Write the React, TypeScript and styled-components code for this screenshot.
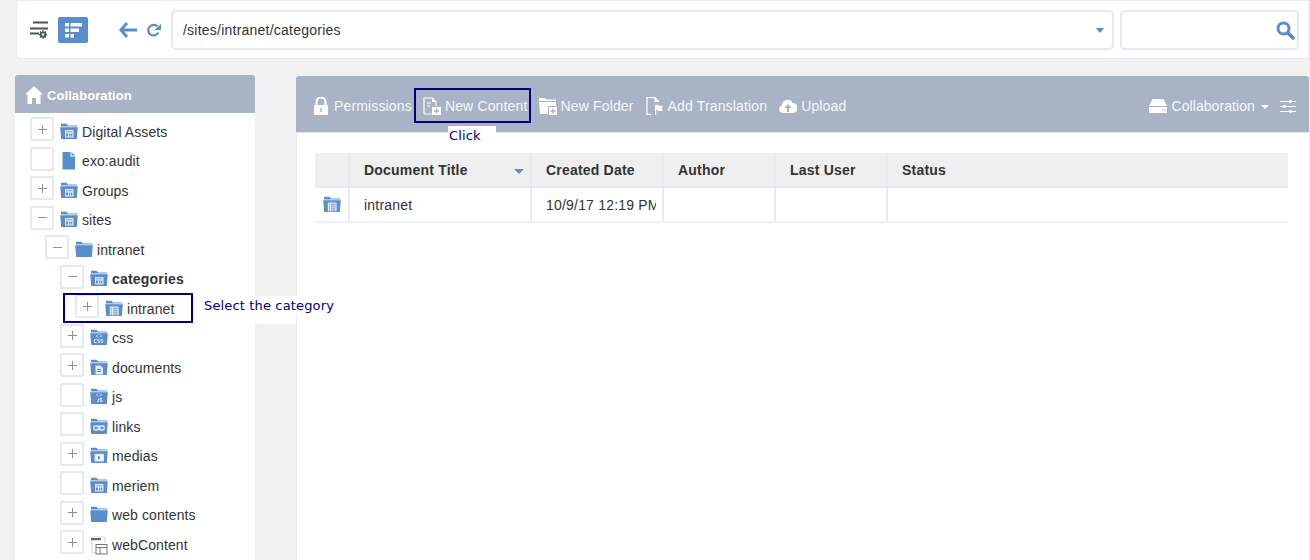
import React from "react";
import styled, { createGlobalStyle } from "styled-components";

const Global = createGlobalStyle`
  html, body { margin: 0; padding: 0; background: #f1f1f1; height: 100%; overflow: hidden; }
  body { font-family: "Liberation Sans", Arial, sans-serif; font-size: 14px; color: #333; }
`;

const Page = styled.div`
  position: relative;
  width: 1310px;
  height: 560px;
  overflow: hidden;
  background: #f1f1f1;
`;
const TopBar = styled.div`
  margin-left: 16px;
  width: 1293px;
  height: 59px;
  box-sizing: border-box;
  background: #fff;
  border: 1px solid #e6ebf1;
  border-radius: 0 0 3px 3px;
  display: flex;
  align-items: center;
  padding: 1px 0 0 13px;
`;
const ViewIcon = styled.div`
  width: 20px;
  height: 20px;
  margin-right: 8px;
  display: flex;
`;
const ViewButton = styled.div`
  width: 30px;
  height: 26px;
  border-radius: 2px;
  background: #5a8dcc;
  display: flex;
  align-items: center;
  justify-content: center;
  margin-right: 31px;
`;
const NavIcon = styled.div<{ $mr: number }>`
  display: flex;
  margin-right: ${(p) => p.$mr}px;
`;
const Field = styled.div<{ $w: number }>`
  width: ${(p) => p.$w}px;
  flex: none;
  height: 40px;
  box-sizing: border-box;
  border: 2px solid #e3e9f1;
  border-radius: 5px;
  display: flex;
  align-items: center;
  justify-content: space-between;
  background: #fff;
  padding: 0 2px 0 10px;
  color: #333;
`;
const PathText = styled.span`
  letter-spacing: 0.23px;
`;
const FieldCaret = styled.span`
  width: 0;
  height: 0;
  border-left: 4.5px solid transparent;
  border-right: 4.5px solid transparent;
  border-top: 5px solid #5a8dcc;
  margin-right: 6px;
`;
const Gap = styled.div`
  width: 6px;
  flex: none;
`;
const Body = styled.div`
  display: flex;
  align-items: flex-start;
  margin-top: 16px;
  padding-left: 15px;
`;
const Side = styled.div`
  width: 240px;
  height: 485px;
  background: #fff;
  border-radius: 3px 3px 0 0;
  flex: none;
`;
const SideHead = styled.div`
  height: 38px;
  box-sizing: border-box;
  background: #a8b3c5;
  border-radius: 3px 3px 0 0;
  display: flex;
  align-items: center;
  padding: 2px 0 0 10px;
  gap: 4px;
  color: #fff;
  font-weight: bold;
  font-size: 13px;
  letter-spacing: 0.08px;
`;
const TreeList = styled.div`
  padding: 4.5px 0 0 15px;
`;
const TreeRow = styled.div<{ $level: number }>`
  height: 29.5px;
  display: flex;
  align-items: flex-start;
  padding-left: ${(p) => p.$level * 15}px;
`;
const Toggle = styled.div`
  width: 24px;
  height: 24px;
  box-sizing: border-box;
  border: 2px solid #e3e9f0;
  border-radius: 2px;
  background: #fff;
  flex: none;
  display: flex;
  align-items: center;
  justify-content: center;
  margin-top: -0.5px;
  margin-right: 6px;
`;
const TreeIcon = styled.div`
  width: 18px;
  height: 18px;
  margin-top: 5px;
  flex: none;
  display: flex;
`;
const TreeLabel = styled.span<{ $bold?: boolean }>`
  margin-left: 4px;
  line-height: 16px;
  margin-top: 6px;
  color: #333;
  letter-spacing: ${(p) => (p.$bold ? "0.2px" : "0.1px")};
  font-weight: ${(p) => (p.$bold ? "bold" : "normal")};
`;
const Main = styled.div`
  margin-left: 41px;
  margin-top: 1px;
  width: 1013px;
  height: 484px;
  background: #fff;
  border-left: 1px solid #e8ecf2;
  box-sizing: border-box;
  flex: none;
  border-radius: 3px 3px 0 0;
`;
const MainHead = styled.div`
  height: 57px;
  margin-left: -1px;
  background: #a8b3c5;
  border-bottom: 1px solid #e3e9f0;
  box-sizing: border-box;
  border-radius: 3px 3px 0 0;
  display: flex;
  align-items: center;
  padding: 4px 13px 0 18px;
  color: #f5f7fa;
  letter-spacing: 0.15px;
`;
const Tool = styled.div<{ $mr: number; $tight?: boolean }>`
  display: flex;
  align-items: center;
  gap: 4px;
  margin-right: ${(p) => p.$mr}px;
  letter-spacing: ${(p) => (p.$tight ? "0.08px" : "inherit")};
`;
const Spacer = styled.div`
  flex: 1;
`;
const WhiteCaret = styled.span`
  width: 0;
  height: 0;
  border-left: 4.5px solid transparent;
  border-right: 4.5px solid transparent;
  border-top: 4.5px solid #fff;
  margin: 1px 11px 0 0;
`;
const Table = styled.div`
  margin: 20px 0 0 18px;
  width: 973px;
`;
const Row = styled.div<{ $head?: boolean }>`
  display: grid;
  grid-template-columns: 35px 182px 132px 112px 112px 1fr;
  height: 35px;
  background: ${(p) => (p.$head ? "#efefef" : "#fff")};
  border-bottom: ${(p) => (p.$head ? "2px solid #e3e9f0" : "2px solid #eff1f4")};
  box-sizing: border-box;
  letter-spacing: 0.2px;
  font-weight: ${(p) => (p.$head ? "bold" : "normal")};
`;
const Cell = styled.div<{ $sep?: boolean; $sort?: boolean; $icon?: boolean }>`
  display: flex;
  align-items: center;
  justify-content: ${(p) => (p.$sort ? "space-between" : "flex-start")};
  box-sizing: border-box;
  overflow: hidden;
  white-space: nowrap;
  padding: ${(p) => (p.$icon ? "0 0 0 8px" : "0 5px 0 14px")};
  border-right: ${(p) => (p.$sep ? "2px solid #e6ebf1" : "none")};
`;
const Clip = styled.span`
  overflow: hidden;
  display: block;
  max-width: 110px;
`;
const SortCaret = styled.span`
  width: 0;
  height: 0;
  border-left: 5px solid transparent;
  border-right: 5px solid transparent;
  border-top: 5px solid #5a8dcc;
  margin-right: 1px;
  margin-top: 3px;
`;
const Frame = styled.div<{ $x: number; $y: number; $w: number; $h: number }>`
  position: absolute;
  left: ${(p) => p.$x}px;
  top: ${(p) => p.$y}px;
  width: ${(p) => p.$w}px;
  height: ${(p) => p.$h}px;
  box-sizing: border-box;
  border: 2px solid #000080;
`;
const Note = styled.div<{ $x: number; $y: number; $w: number; $h: number }>`
  position: absolute;
  left: ${(p) => p.$x}px;
  top: ${(p) => p.$y}px;
  width: ${(p) => p.$w}px;
  height: ${(p) => p.$h}px;
  box-sizing: border-box;
  background: #fff;
  color: #000080;
  font: 13px/20px "DejaVu Sans", sans-serif;
  letter-spacing: 0.15px;
  white-space: nowrap;
`;
const NoteText = styled.span`
  margin-left: 1px;
`;

const B = "#5a8dcc";
const L = "#b4cbe8";
const P = "#e2ecf8";

type Glyph = "none" | "grid" | "list" | "code" | "css" | "js" | "doc" | "link" | "play";

const GlyphArt = ({ g }: { g: Glyph }) => {
  switch (g) {
    case "grid":
      return (
        <g>
          <rect x="5" y="7" width="8.500" height="7.500" fill={P} />
          <path d="M6 8.700h6.500" stroke="#7fa6d6" strokeWidth="1" />
          <rect x="6" y="10.500" width="2" height="3" fill={B} />
          <rect x="9" y="10.500" width="1.200" height="3" fill={B} />
          <rect x="11" y="10.500" width="1.200" height="3" fill={B} />
        </g>
      );
    case "list":
      return (
        <g>
          <rect x="4.800" y="6.500" width="8.800" height="8.800" fill={P} />
          <path d="M6 8.200h1M8 8.200h4.500M6 10.200h1M8 10.200h4.500M6 12.200h1M8 12.200h4.500M6 14.200h1M8 14.200h4.500" stroke={B} strokeWidth=".9" />
        </g>
      );
    case "code":
    case "css":
    case "js":
      return (
        <g fill="none" stroke={P} strokeWidth=".9">
          <path d="M8 5.500 6.500 7 8 8.500M10 5.500 11.500 7 10 8.500" />
          {g === "css" ? (
            <path d="M6.500 10.500h-2v3h2M9.600 10.500h-2v1.500h2v1.500h-2M12.900 10.500h-2v1.500h2v1.500h-2" strokeWidth=".8" />
          ) : (
            <path d="M8.500 10.500v3H7M12 10.500h-2v1.500h2v1.500h-2" strokeWidth=".9" />
          )}
        </g>
      );
    case "doc":
      return (
        <g>
          <path d="M5.500 6.500h5L13 9v6.500H5.500z" fill={P} />
          <path d="M7 10.500h4M7 12.500h4" stroke={B} strokeWidth=".9" />
        </g>
      );
    case "link":
      return (
        <g fill="none" stroke={P} strokeWidth="1.300">
          <rect x="3.800" y="8" width="5" height="4" rx="1.400" />
          <rect x="9.200" y="8" width="5" height="4" rx="1.400" />
          <path d="M7 10h4" strokeWidth="1" />
        </g>
      );
    case "play":
      return (
        <g>
          <rect x="4.500" y="6.800" width="9.500" height="7.700" fill={P} />
          <rect x="6" y="8.200" width="6.500" height="5" fill="#fff" />
          <path d="M8 8.800v3.800l3-1.900z" fill={B} />
        </g>
      );
    default:
      return null;
  }
};

const Folder = ({ g = "none" }: { g?: Glyph }) => (
  <svg width="18" height="17" viewBox="0 0 18 17">
    <path d="M1 3.500V.8h5.500L8 2.400h9v1.100z" fill={B} />
    <path d="M1 3.200h16.500v1.100H1z" fill={L} />
    <path d="M.2 4.200h17.600l-1 11.800H1.200z" fill={B} />
    <GlyphArt g={g} />
  </svg>
);

const DocIcon = () => (
  <svg width="18" height="18" viewBox="0 0 18 18">
    <path d="M2.500 0H10.500v4.500H15V17.500H2.500zM11.500 0 15 3.500h-3.500z" fill={B} />
  </svg>
);

const WebContentIcon = () => (
  <svg width="18" height="19" viewBox="0 0 18 19">
    <path d="M1.500 1h12.500a1 1 0 0 1 1 1v5M2 1v15.500h3" fill="none" stroke="#d6d6d6" />
    <rect x="1" y="2" width="10" height="2.200" fill="#666" />
    <rect x="6" y="8.500" width="11" height="9.500" fill="#fff" stroke="#777" />
    <path d="M6 11.500h11M10 11.500v6.500" stroke="#777" />
  </svg>
);

const PlusMinus = ({ t }: { t: "plus" | "minus" | "" }) =>
  t === "" ? null : (
    <svg width="9" height="9" viewBox="0 0 9 9">
      <path d={t === "plus" ? "M0 4.500h9M4.500 0v9" : "M0 4.500h9"} stroke="#8d9096" strokeWidth="1" />
    </svg>
  );

type Node = { label: string; level: number; t: "plus" | "minus" | ""; icon: React.ReactNode; bold?: boolean };

const nodes: Node[] = [
  { label: "Digital Assets", level: 0, t: "plus", icon: <Folder g="grid" /> },
  { label: "exo:audit", level: 0, t: "", icon: <DocIcon /> },
  { label: "Groups", level: 0, t: "plus", icon: <Folder g="grid" /> },
  { label: "sites", level: 0, t: "minus", icon: <Folder g="grid" /> },
  { label: "intranet", level: 1, t: "minus", icon: <Folder /> },
  { label: "categories", level: 2, t: "minus", icon: <Folder g="grid" />, bold: true },
  { label: "intranet", level: 3, t: "plus", icon: <Folder g="list" /> },
  { label: "css", level: 2, t: "plus", icon: <Folder g="css" /> },
  { label: "documents", level: 2, t: "plus", icon: <Folder g="doc" /> },
  { label: "js", level: 2, t: "", icon: <Folder g="js" /> },
  { label: "links", level: 2, t: "", icon: <Folder g="link" /> },
  { label: "medias", level: 2, t: "plus", icon: <Folder g="play" /> },
  { label: "meriem", level: 2, t: "", icon: <Folder g="grid" /> },
  { label: "web contents", level: 2, t: "plus", icon: <Folder /> },
  { label: "webContent", level: 2, t: "plus", icon: <WebContentIcon /> },
];

const W = "#fff";
const H = "#a8b3c5";

export default function App() {
  return (
    <Page>
      <Global />
      <TopBar>
        <ViewIcon>
          <svg width="20" height="20" viewBox="0 0 20 20">
            <path d="M3 2.500h15M0 8.500h18M0 13.500h9" stroke="#4b5260" strokeWidth="1.800" />
            <circle cx="13" cy="14.500" r="2.200" fill="none" stroke="#4b5260" strokeWidth="1.800" />
            <path d="M13 10.300v1.800M13 16.900v1.800M8.800 14.500h1.800M15.400 14.500h1.800M10 11.500l1.300 1.300M14.700 16.200l1.300 1.300M16 11.500l-1.300 1.300M11.300 16.200 10 17.500" stroke="#4b5260" strokeWidth="1.300" />
          </svg>
        </ViewIcon>
        <ViewButton>
          <svg width="17" height="15" viewBox="0 0 17 15">
            <path d="M0 0h4v3.500H0zM5.500 0H17v3.500H5.500zM0 5.500h4V9H0zM5.500 5.500H14V9H5.500zM0 11h4v3.500H0zM5.500 11H9v3.500H5.500z" fill="#fff" />
          </svg>
        </ViewButton>
        <NavIcon $mr={9}>
          <svg width="18" height="16" viewBox="0 0 18 16">
            <path d="M8 1 1.800 8 8 15M2 8h16" fill="none" stroke={B} strokeWidth="2.800" />
          </svg>
        </NavIcon>
        <NavIcon $mr={10}>
          <svg width="15" height="14" viewBox="0 0 15 14">
            <path d="M12.300 9.500A5.300 5.300 0 1 1 11.300 3.400" fill="none" stroke={B} strokeWidth="2.200" />
            <path d="M8.500 7H15V1z" fill={B} />
          </svg>
        </NavIcon>
        <Field $w={943}>
          <PathText>/sites/intranet/categories</PathText>
          <FieldCaret />
        </Field>
        <Gap />
        <Field $w={179}>
          <span />
          <svg width="19" height="19" viewBox="0 0 19 19">
            <circle cx="7.500" cy="7.500" r="5.500" fill="none" stroke={B} strokeWidth="3" />
            <path d="M12 12l5 5" stroke={B} strokeWidth="3.600" strokeLinecap="round" />
          </svg>
        </Field>
      </TopBar>
      <Body>
        <Side>
          <SideHead>
            <svg width="18" height="18" viewBox="0 0 18 18">
              <path d="M9 0 18 8.500h-2.500V18H11v-6H7v6H2.500V8.500H0z" fill="#fff" />
            </svg>
            Collaboration
          </SideHead>
          <TreeList>
            {nodes.map((n, i) => (
              <TreeRow key={i} $level={n.level}>
                <Toggle>
                  <PlusMinus t={n.t} />
                </Toggle>
                <TreeIcon>{n.icon}</TreeIcon>
                <TreeLabel $bold={n.bold}>{n.label}</TreeLabel>
              </TreeRow>
            ))}
          </TreeList>
        </Side>
        <Main>
          <MainHead>
            <Tool $mr={11}>
              <svg width="16" height="18" viewBox="1 0 16 18">
                <path d="M3.500 8V5a4.500 4.500 0 0 1 9 0v3" fill="none" stroke={W} strokeWidth="2.200" />
                <path d="M1 8h14v10H1z" fill={W} />
                <rect x="7.300" y="11" width="1.400" height="4" fill={H} />
              </svg>
              Permissions
            </Tool>
            <Tool $mr={11}>
              <svg width="18" height="18" viewBox="0 0 18 18">
                <path d="M1 17V1h8l4 4v4M8.500 17H1M4 6h4M4 9h3" fill="none" stroke={W} strokeWidth="1.200" />
                <path d="M9 0v5h4z" fill={W} />
                <rect x="9" y="10" width="9" height="8" fill={W} />
                <path d="M13.500 11.500v5M11 14h5" stroke={H} strokeWidth="1.300" />
              </svg>
              New Content
            </Tool>
            <Tool $mr={12}>
              <svg width="18" height="18" viewBox="0 0 18 18">
                <path d="M0 3V1h6l1.500 1.500H17V4H0z" fill={W} />
                <path d="M0 5h17v4H9v8H1z" fill={W} />
                <rect x="10" y="10" width="8" height="8" fill={W} />
                <path d="M14 11.500v5M11.500 14h5" stroke={H} strokeWidth="1.300" />
              </svg>
              New Folder
            </Tool>
            <Tool $mr={12}>
              <svg width="18" height="18" viewBox="0 0 18 18">
                <path d="M9 .6H1v16.800h4M9 .6v3.500h3" fill="none" stroke={W} strokeWidth="1.200" />
                <path d="M9 0l4 4v1H9z" fill={W} />
                <path d="M9 8h1.200v9.500H9z" fill={W} />
                <path d="M10.200 8H13l.6 1H17l-1.200 2.500L17 14h-5l-.5-1h-1.300z" fill={W} />
              </svg>
              Add Translation
            </Tool>
            <Tool $mr={0}>
              <svg width="18" height="14" viewBox="0 0 18 14">
                <path d="M4 14a4 4 0 0 1-1-7.800A5.500 5.500 0 0 1 13.500 4 4.200 4.200 0 0 1 14 14z" fill={W} />
                <path d="M9 5 5.500 9H8v4h2V9h2.500z" fill={H} />
              </svg>
              Upload
            </Tool>
            <Spacer />
            <Tool $mr={6} $tight>
              <svg width="18" height="14" viewBox="0 0 18 14">
                <path d="M3.500 0h11L18 7H0z" fill={W} />
                <path d="M0 8h18v6H0z" fill={W} />
                <path d="M13 11h1.500M15.500 11H17" stroke={H} strokeWidth="1" />
              </svg>
              Collaboration
            </Tool>
            <WhiteCaret />
            <svg width="16" height="13" viewBox="0 0 16 13">
              <path d="M0 1.500h16M0 6.500h16M0 11.500h16" stroke={W} strokeWidth="1" />
              <path d="M10.500 0v3M4.500 5v3M10.500 10v3" stroke={W} strokeWidth="2" />
            </svg>
          </MainHead>
          <Table>
            <Row $head>
              <Cell $sep />
              <Cell $sep $sort>
                Document Title
                <SortCaret />
              </Cell>
              <Cell $sep>Created Date</Cell>
              <Cell $sep>Author</Cell>
              <Cell $sep>Last User</Cell>
              <Cell>Status</Cell>
            </Row>
            <Row>
              <Cell $sep $icon>
                <Folder g="list" />
              </Cell>
              <Cell $sep>intranet</Cell>
              <Cell $sep>
                <Clip>10/9/17 12:19 PM</Clip>
              </Cell>
              <Cell $sep />
              <Cell $sep />
              <Cell />
            </Row>
          </Table>
        </Main>
      </Body>
      <Frame $x={414} $y={88} $w={117} $h={35} />
      <Note $x={448} $y={126} $w={48} $h={15}>
        <NoteText>Click</NoteText>
      </Note>
      <Frame $x={63} $y={293} $w={130} $h={30} />
      <Note $x={193} $y={296} $w={103} $h={28} />
      <Note $x={204} $y={296} $w={130} $h={20}>
        Select the category
      </Note>
    </Page>
  );
}
